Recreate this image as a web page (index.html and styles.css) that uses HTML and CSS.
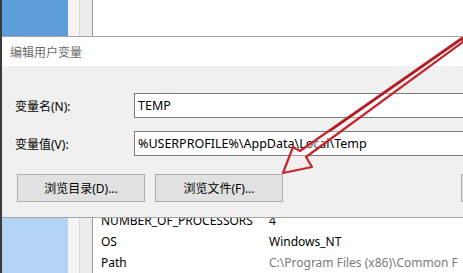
FILE: index.html
```html
<!DOCTYPE html>
<html lang="zh-CN">
<head>
<meta charset="utf-8">
<link rel="stylesheet" href="styles.css">
</head>
<body>
<div class="window">
  <div class="edge"></div>
  <div class="nav">
    <div class="nav-top"></div>
    <div class="nav-bottom"></div>
  </div>
  <div class="splitter">
    <div class="split-a"></div>
    <div class="split-b"></div>
  </div>
  <div class="main">
    <div class="row"><span class="name">NUMBER_OF_PROCESSORS</span><span class="val">4</span></div>
    <div class="row"><span class="name">OS</span><span class="val">Windows_NT</span></div>
    <div class="row"><span class="name">Path</span><span class="val faded">C:\Program Files (x86)\Common F</span></div>
  </div>
</div>

<div class="dialog">
  <div class="title">编辑用户变量</div>
  <div class="body">
    <div class="field">
      <label class="label">变量名(N):</label>
      <div class="input">TEMP</div>
    </div>
    <div class="field">
      <label class="label">变量值(V):</label>
      <div class="input">%USERPROFILE%\AppData\Local\Temp</div>
    </div>
    <div class="buttons">
      <div class="btn">浏览目录(D)...</div>
      <div class="btn">浏览文件(F)...</div>
      <div class="edge-btn"></div>
    </div>
  </div>
</div>

<svg class="arrow" width="463" height="273" viewBox="0 0 463 273">
  <path d="M462 38 L300 151 L293 147 L283 173 L312 167 L306 157 L463 42 Z" fill="rgba(255,235,235,0.35)" stroke="#c1272d" stroke-width="2.2" stroke-linejoin="round"/>
  <path d="M462 39 L330 131" stroke="#a81e25" stroke-width="2" fill="none" stroke-linecap="round"/>
</svg>
</body>
</html>
```
FILE: styles.css
```css
* { box-sizing: border-box; }
html, body { margin: 0; padding: 0; }
body {
  width: 463px;
  height: 273px;
  overflow: hidden;
  position: relative;
  background: #fff;
  font-family: "Noto Sans", "Noto Sans CJK SC", sans-serif;
  font-size: 12px;
  color: #000;
}
.window {
  display: flex;
  height: 273px;
}
.edge { width: 2px; background: #3a3a3a; }
.nav { width: 66px; display: flex; flex-direction: column; }
.nav-top { height: 36px; background: #5b9cd9; }
.nav-bottom { flex: 1; background: #b2d3f3; }
.splitter { width: 25px; display: flex; }
.split-a { width: 12px; background: #f4f4f4; border-right: 1px solid #d8d8d8; }
.split-b { flex: 1; background: #ececec; border-right: 1px solid #9a9a9a; }
.main {
  flex: 1;
  padding-top: 210px;
  padding-left: 8px;
}
.row { display: flex; height: 21px; align-items: center; line-height: 21px; white-space: nowrap; }
.name { width: 168px; }
.faded { color: #7a7a7a; }

.dialog {
  position: absolute;
  top: 36px;
  left: 2px;
  right: 0;
  height: 182px;
  border-top: 1px solid #a6a6a6;
  border-bottom: 1px solid #a6a6a6;
  display: flex;
  flex-direction: column;
}
.title {
  height: 29px;
  background: #fff;
  color: #6a6a6a;
  padding-left: 8px;
  padding-top: 2px;
  line-height: 26px;
  font-family: "Noto Sans CJK SC", sans-serif;
}
.body {
  flex: 1;
  background: #f0f0f0;
  padding: 27px 0 0 13px;
  display: flex;
  flex-direction: column;
}
.field {
  display: flex;
  align-items: center;
  margin-bottom: 13px;
}
.label {
  width: 119px;
}
.input {
  flex: 1;
  height: 25px;
  background: #fff;
  border: 1px solid #7a7a7a;
  border-right: none;
  padding-left: 3px;
  line-height: 23px;
  white-space: nowrap;
  font-size: 12.5px;
}
.buttons {
  display: flex;
  gap: 10px;
  margin-top: 5px;
  padding-left: 2px;
}
.btn {
  width: 128px;
  height: 28px;
  background: #e1e1e1;
  border: 1px solid #adadad;
  display: flex;
  align-items: center;
  justify-content: center;
}
.edge-btn {
  flex: none;
  width: 2px;
  height: 28px;
  margin-left: auto;
  background: #e1e1e1;
  border-left: 1px solid #adadad;
  border-top: 1px solid #adadad;
  border-bottom: 1px solid #adadad;
}
.arrow { position: absolute; top: 0; left: 0; pointer-events: none; }
```
